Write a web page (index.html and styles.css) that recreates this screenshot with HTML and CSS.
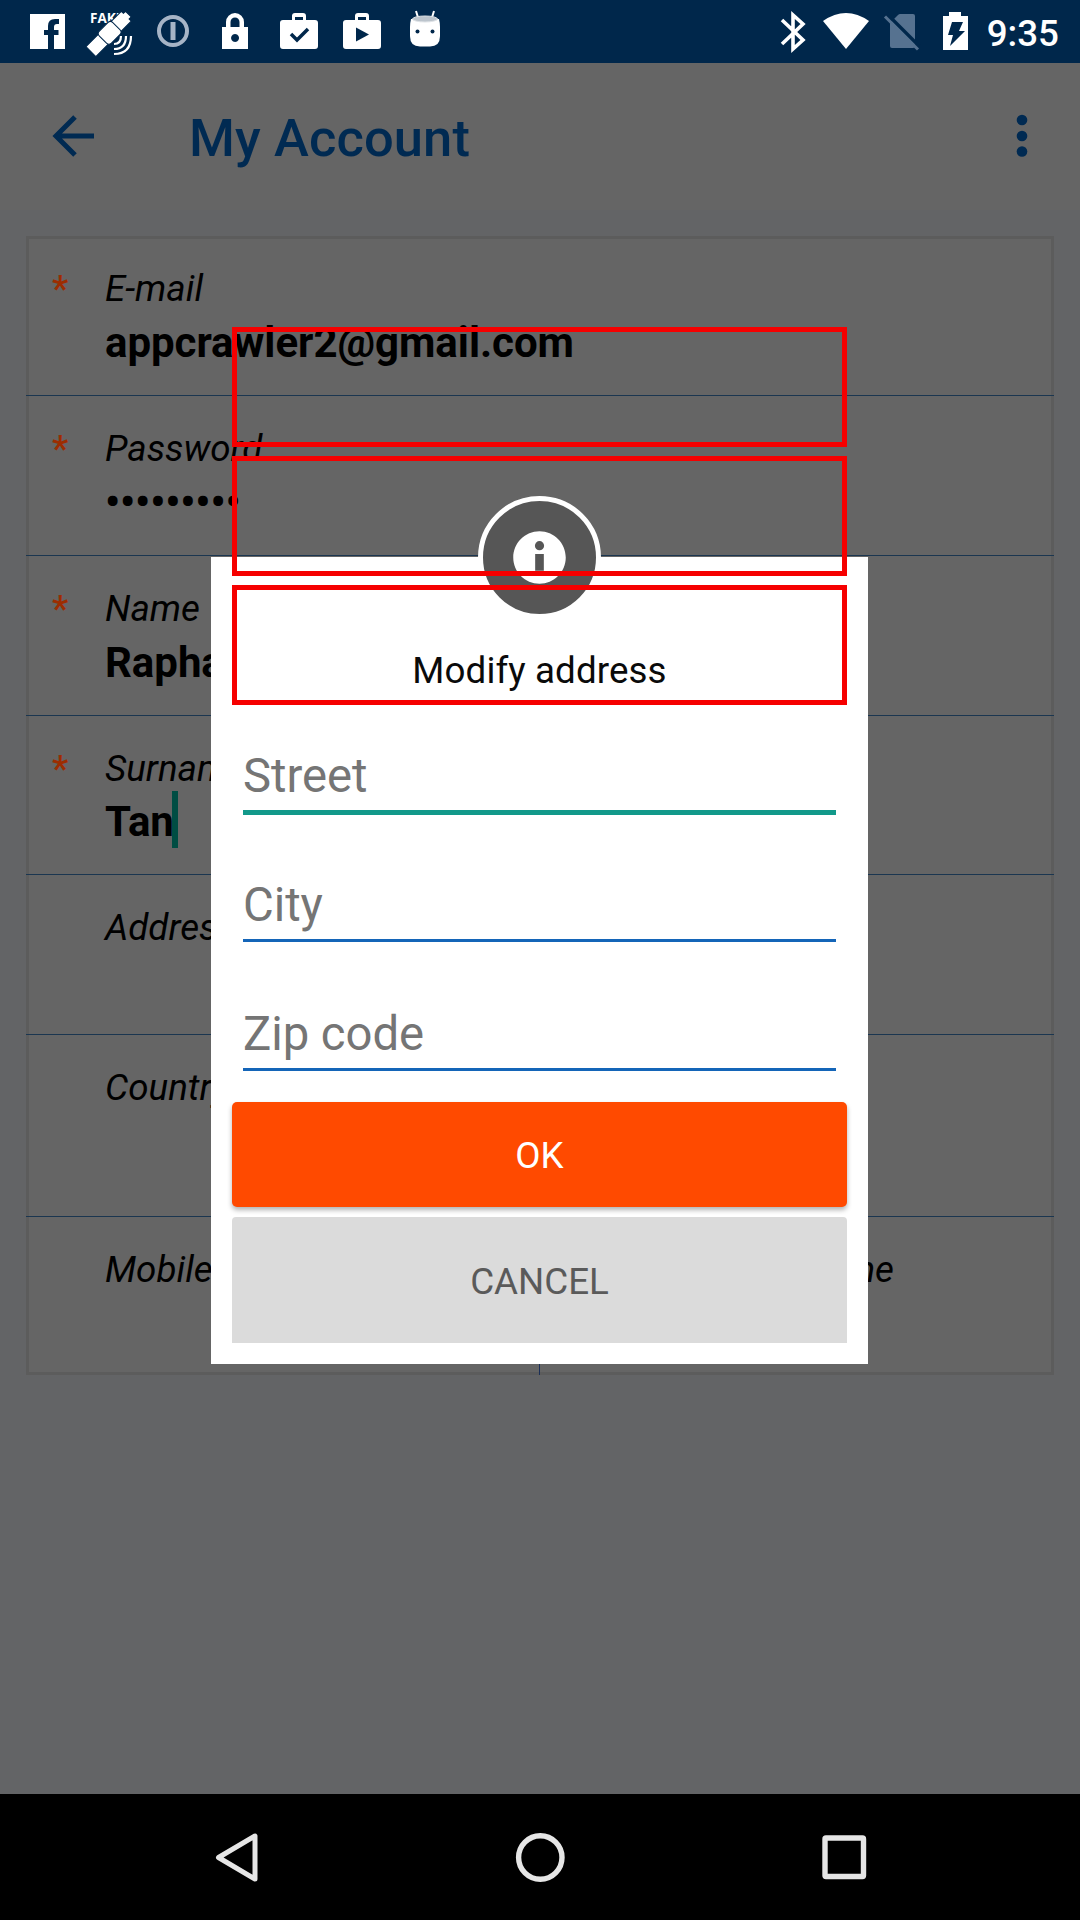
FILE: index.html
```html
<!DOCTYPE html>
<html lang="en">
<head>
<meta charset="utf-8">
<title>My Account</title>
<link rel="stylesheet" href="styles.css">
</head>
<body>
<div class="screen">
  <header class="status">
    <div class="status-left">
      <svg class="ic-fb" viewBox="0 0 35 35"><path fill="#fff" d="M0 0h35v35H24V21h4.500V16H24v-3q0-3 3-3h2V5h-4q-7 0-7 7v4h-4v5h4v14H0z"/></svg>
      <div class="fake">
        <span>FAKE</span>
        <svg viewBox="0 0 48 48"><g transform="translate(24 23.500) rotate(-45)" fill="#fff" stroke="#00274b" stroke-width="1"><path d="M-27-7h18v14h-18zM8-7h15v3h3v8h-3v3H8z"/><rect x="-10" y="-8.500" width="19" height="17" rx="3.500"/></g><g fill="none" stroke="#fff" stroke-width="2.200"><path d="M35 27q0 8-7 8M40 27q0 13-12 13M45 27q0 18-17 18"/></g></svg>
      </div>
      <svg class="ic-info" viewBox="0 0 32 32"><circle cx="16" cy="16" r="14" fill="none" stroke="#a6b4c6" stroke-width="4"/><path stroke="#a6b4c6" stroke-width="5" d="M16 7v18"/></svg>
      <svg class="ic-lock" viewBox="0 0 26 36"><path fill="#fff" fill-rule="evenodd" d="M4 14V9a9 9 0 0 1 18 0v5h4v22H0V14zM8.500 14h9V9a4.500 4.500 0 0 0-9 0zM13 21a4 4 0 1 0 .1 0z"/></svg>
      <svg class="ic-bag" viewBox="0 0 38 36"><path fill="#fff" fill-rule="evenodd" d="M12 7V3q0-3 3-3h8q3 0 3 3v4h9q3 0 3 3v23q0 3-3 3H3q-3 0-3-3V10q0-3 3-3zM15 7h8V4h-8z"/><path d="M11 21l6 6 11-11" fill="none" stroke="#00274b" stroke-width="3.500"/></svg>
      <svg class="ic-bag" viewBox="0 0 38 36"><path fill="#fff" fill-rule="evenodd" d="M12 7V3q0-3 3-3h8q3 0 3 3v4h9q3 0 3 3v23q0 3-3 3H3q-3 0-3-3V10q0-3 3-3zM15 7h8V4h-8z"/><path d="M13 14.500v14l13-7z" fill="#00274b"/></svg>
      <svg class="ic-droid" viewBox="0 0 30 36"><path d="M6 0l2.500 8M24 0l-2.500 8" stroke="#fff" stroke-width="2"/><path fill="#fff" d="M1 8h28q1 4 1 8v9q0 10.500-10 10.500H10Q0 35.500 0 25v-9q0-4 1-8z"/><ellipse cx="15" cy="8" rx="12.500" ry="3" fill="#bcc4cc" stroke="#dfe3e7"/><circle cx="7.500" cy="20.500" r="2" fill="#00274b"/><circle cx="22.500" cy="20.500" r="2" fill="#00274b"/></svg>
    </div>
    <div class="status-right">
      <svg class="ic-bt" viewBox="0 0 24 38"><path d="M1 7l21 20-10 9V2l10 9L1 31" fill="none" stroke="#fff" stroke-width="3.600"/></svg>
      <svg class="ic-wifi" viewBox="0 0 46 36"><path fill="#fff" d="M0 8Q23-8 46 8L23 36z"/></svg>
      <svg class="ic-sim" viewBox="0 0 34 36"><path fill="#567290" d="M5 9l8-8q1-1 2-1h13q2 0 2 2v30q0 2-2 2H7q-2 0-2-2z"/><path d="M2 0l32 32" stroke="#00274b" stroke-width="3.500"/><path d="M0 2.500l33 33" stroke="#567290" stroke-width="3"/></svg>
      <svg class="ic-batt" viewBox="0 0 25 38"><path fill="#fff" d="M6 0h12v4h7v34H0V4h6z"/><path fill="#00274b" d="M9 10h11l-4 9h6L7 34l3-11H5z"/></svg>
      <span class="clock">9:35</span>
    </div>
  </header>

  <div class="toolbar">
    <svg class="ic-back" viewBox="0 0 42 42"><path d="M42 21H4M23 2L4 21l19 19" fill="none" stroke="#002a52" stroke-width="5"/></svg>
    <h1>My Account</h1>
    <svg class="ic-more" viewBox="0 0 12 44"><g fill="#002a52"><circle cx="6" cy="6" r="5.300"/><circle cx="6" cy="22" r="5.300"/><circle cx="6" cy="37.500" r="5.300"/></g></svg>
  </div>

  <main class="content">
    <div class="card">
      <div class="row first"><span class="req">*</span><div class="field"><i>E-mail</i><b>appcrawler2@gmail.com</b></div></div>
      <div class="row"><span class="req">*</span><div class="field"><i>Password</i><b class="dots">•••••••••</b></div></div>
      <div class="row"><span class="req">*</span><div class="field"><i>Name</i><b>Raphael</b></div></div>
      <div class="row short"><span class="req">*</span><div class="field"><i>Surname</i><b class="typing">Tan</b></div></div>
      <div class="row"><span class="req"></span><div class="field"><i>Address</i></div></div>
      <div class="row tall"><span class="req"></span><div class="field"><i>Country</i></div></div>
      <div class="split">
        <div class="row"><span class="req"></span><div class="field"><i>Mobile</i></div></div>
        <div class="row"><span class="req"></span><div class="field phone"><i>Landline phone</i></div></div>
      </div>
    </div>
  </main>

  <nav class="nav">
    <svg viewBox="0 0 60 60"><path d="M49 9v43L12.500 30.500z" fill="none" stroke="#e6e6e6" stroke-width="5" stroke-linejoin="round"/></svg>
    <svg viewBox="0 0 60 60"><circle cx="30.300" cy="30.500" r="21.700" fill="none" stroke="#e6e6e6" stroke-width="5.400"/></svg>
    <svg viewBox="0 0 60 60"><rect x="11" y="11" width="38.500" height="38.500" rx="1" fill="none" stroke="#e6e6e6" stroke-width="5.400"/></svg>
  </nav>

  <section class="dialog">
    <div class="badge"><svg viewBox="0 0 24 24"><path fill="#fff" d="M12 2C6.480 2 2 6.480 2 12s4.480 10 10 10 10-4.480 10-10S17.520 2 12 2zm1.650 15h-3.300v-6.300h3.300z"/><circle cx="12" cy="7.500" r="1.750" fill="#565656"/></svg></div>
    <h2>Modify address</h2>
    <div class="input active">Street</div>
    <div class="input">City</div>
    <div class="input">Zip code</div>
    <div class="btn ok">OK</div>
    <div class="btn cancel">CANCEL</div>
  </section>

  <div class="marks"><div></div><div></div><div></div></div>
</div>
</body>
</html>
```
FILE: styles.css
```css
* { box-sizing: border-box; }
body { margin: 0; font-family: Roboto, sans-serif; font-size: 36.75px; line-height: 43px; color: #000; }
svg { display: block; flex: none; overflow: visible; }
.screen { position: relative; width: 1080px; height: 1920px; overflow: hidden; background: #636466; display: flex; flex-direction: column; }

.status { height: 63px; background: #00274b; display: flex; justify-content: space-between; padding: 0 21px 0 30px; color: #fff; }
.status-left, .status-right { display: flex; align-items: flex-start; }
.ic-fb { width: 35px; height: 35px; margin-top: 14px; }
.fake { position: relative; width: 48px; height: 48px; margin: 9px 0 0 21px; }
.fake svg { position: relative; width: 48px; height: 48px; }
.fake span { position: absolute; left: 4px; top: 2px; font: bold 13.5px/14px "Open Sans", sans-serif; }
.ic-info { width: 32px; height: 32px; margin: 15px 0 0 23px; }
.ic-lock { width: 26px; height: 36px; margin: 13px 0 0 33px; }
.ic-bag { width: 38px; height: 36px; margin: 13px 0 0 32px; }
.ic-bag + .ic-bag { margin-left: 25px; }
.ic-droid { width: 30px; height: 36px; margin: 11px 0 0 29px; }
.ic-bt { width: 24px; height: 38px; margin: 13px 0 0; }
.ic-wifi { width: 46px; height: 36px; margin: 13px 0 0 18px; }
.ic-sim { width: 34px; height: 36px; margin: 14px 0 0 16px; }
.ic-batt { width: 25px; height: 38px; margin: 12px 0 0 24px; }
.clock { font-weight: 500; margin: 12px 0 0 19px; }

.toolbar { height: 147px; background: #656565; display: flex; align-items: center; padding: 0 52px 1px 52px; color: #002a52; }
.ic-back { width: 42px; height: 42px; }
.toolbar h1 { margin: 4px 0 0 95px; flex: 1; font-size: 52.5px; line-height: 62px; font-weight: 500; letter-spacing: 0.1px; }
.ic-more { width: 12px; height: 44px; }

.content { flex: 1; padding: 26px 26px 0 26px; }
.card { height: 1139px; border: 3px solid #5c5c5c; background: #656565; }
.row { height: 160px; margin: 0 -3px; padding: 31px 0 0 27px; display: flex; border-bottom: 1px solid #1b3650; }
.row.first { height: 157px; padding-top: 28px; }
.row.short { height: 159px; }
.row.tall { height: 182px; }
.req { width: 52px; color: #9c2d00; font-weight: 500; margin-left: -1px; }
.field { display: flex; flex-direction: column; gap: 8px; align-items: flex-start; white-space: nowrap; margin-left: 1px; }
.field b { font-size: 42px; line-height: 49px; letter-spacing: -0.04px; }
.field .typing { border-right: 6px solid #004d43; height: 57px; padding-top: 6px; margin: -7px 0 0; width: 73px; }
.field.phone { width: 275px; align-items: flex-end; }
.split { display: grid; grid-template-columns: 513px 1fr; margin: 0 -3px; }
.split .row { height: 158px; margin: 0; border-bottom: 0; }
.split .row + .row { border-left: 1px solid #1b2f58; }

.nav { height: 126px; background: #000; display: flex; justify-content: center; align-items: center; gap: 244px; }
.nav svg { width: 60px; height: 60px; }

.dialog { position: absolute; left: 211px; top: 557px; width: 657px; height: 807px; background: #fff; padding: 0 21px; display: flex; flex-direction: column; align-items: center; }
.badge { width: 123px; height: 123px; margin-top: -61px; border: 5.500px solid #fff; border-radius: 50%; background: #565656; display: flex; align-items: center; justify-content: center; flex: none; }
.badge svg { width: 63px; height: 63px; }
.dialog h2 { margin: 30px 0 57px; font-size: 36.75px; line-height: 43px; font-weight: 400; letter-spacing: 0.1px; color: #0a0a0a; }
.input { width: 593px; height: 64px; margin-bottom: 65px; font-size: 47.25px; line-height: 55px; letter-spacing: -0.05px; color: #757575; border-bottom: 3px solid #1465b8; }
.input.active { height: 66px; margin-bottom: 63px; border-bottom: 5px solid #12998a; }
.btn { width: 615px; display: flex; align-items: center; justify-content: center; flex: none; }
.ok { height: 105px; margin-top: -34px; padding-top: 2px; background: #ff4a00; color: #fff; border-radius: 5px; box-shadow: 0 3px 5px rgba(0,0,0,.3); }
.cancel { height: 126px; margin-top: 10px; padding-top: 2px; background: #dbdbdb; color: #5a5a5a; border-radius: 4px 4px 0 0; }

/* highlight frames laid over the dialog */
.marks { position: absolute; left: 232px; top: 327px; display: flex; flex-direction: column; gap: 9px; }
.marks div { width: 615px; height: 120px; border: 5px solid #f60000; }
```
